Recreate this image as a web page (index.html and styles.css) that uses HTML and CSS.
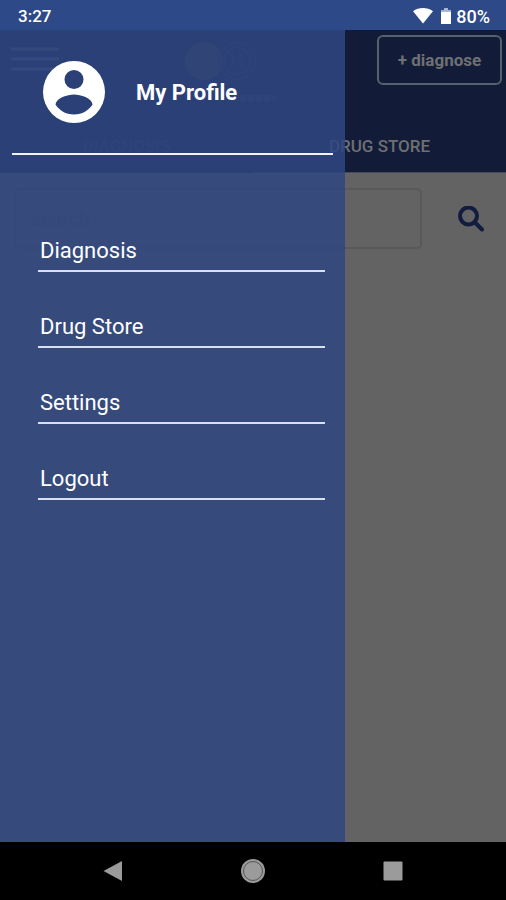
FILE: index.html
```html
<!DOCTYPE html>
<html lang="en">
<head>
<meta charset="utf-8">
<meta name="viewport" content="width=device-width, initial-scale=1">
<title>My Profile</title>
<link rel="stylesheet" href="styles.css">
</head>
<body>
<div class="status">
  <span class="clock">3:27</span>
  <span class="indicators">
    <svg class="wifi" viewBox="0 0 20 16" aria-hidden="true"><path d="M0 3.200C5.600-1 14.400-1 20 3.200L10 15.500Z"/></svg>
    <svg class="battery" viewBox="0 0 10 16" aria-hidden="true"><path class="battery-empty" d="M3 0h4v2h3v3H0V2h3Z"/><path d="M0 4h10v12H0Z"/></svg>
    <span>80%</span>
  </span>
</div>
<div class="screen">
  <header class="header">
    <div class="topbar">
      <button class="menu" type="button" aria-label="Menu">
        <svg viewBox="0 0 48 24" aria-hidden="true"><path d="M0 2h48M0 12h48M0 22h48"/></svg>
      </button>
      <svg class="logo" viewBox="0 0 94 64" aria-hidden="true">
        <circle class="logo-sun" cx="20" cy="21" r="19"/>
        <circle class="logo-ring" cx="53" cy="21" r="18"/>
        <circle class="logo-ring" cx="53" cy="21" r="13"/>
        <path class="logo-ring" d="M47 14l4 5-3 6M54 12l5 6-4 5 4 6"/>
        <path class="logo-base" d="M56 58h36"/>
      </svg>
      <button class="diagnose" type="button">+ diagnose</button>
    </div>
    <nav class="tabs">
      <a class="tab" href="#diagnosis">DIAGNOSIS</a>
      <a class="tab active" href="#store">DRUG STORE</a>
    </nav>
  </header>
  <form class="search">
    <input class="field" type="text" placeholder="search" aria-label="Search">
    <button class="go" type="button" aria-label="Search">
      <svg viewBox="0 0 26 26" aria-hidden="true"><circle cx="10.500" cy="10" r="8.500"/><path d="M17 16.500l7 7"/></svg>
    </button>
  </form>
  <aside class="drawer">
    <a class="profile" href="#profile">
      <svg class="avatar" viewBox="0 0 64 64" aria-hidden="true"><path fill-rule="evenodd" d="M32 1a31 31 0 1 0 0 62a31 31 0 1 0 0-62ZM32 10a9.500 9.500 0 1 1 0 19a9.500 9.500 0 1 1 0-19ZM32 54.500C23.500 54.500 17.500 50.500 13.500 44.500C14 38 25.500 34.500 32 34.500S50 38 50.500 44.500C46.500 50.500 40.500 54.500 32 54.500Z"/></svg>
      <span>My Profile</span>
    </a>
    <nav class="links">
      <a class="link" href="#diagnosis">Diagnosis</a>
      <a class="link" href="#store">Drug Store</a>
      <a class="link" href="#settings">Settings</a>
      <a class="link" href="#logout">Logout</a>
    </nav>
  </aside>
</div>
<div class="system">
  <button type="button" aria-label="Back"><svg viewBox="0 0 24 24" aria-hidden="true"><path d="M2.500 12L21 2v20Z"/></svg></button>
  <button type="button" aria-label="Home"><svg viewBox="0 0 24 24" aria-hidden="true"><circle cx="12" cy="12" r="12"/><circle class="home-ring" cx="12" cy="12" r="9.500"/></svg></button>
  <button type="button" aria-label="Recent apps"><svg viewBox="0 0 24 24" aria-hidden="true"><rect x="2.500" y="2.500" width="19" height="19" rx="1"/></svg></button>
</div>
</body>
</html>
```

FILE: styles.css
```css
* { box-sizing: border-box; }
body {
  margin: 0;
  min-height: 100vh;
  display: flex;
  flex-direction: column;
  font-family: Roboto, "Liberation Sans", sans-serif;
  background: #636363;
}
a { color: inherit; text-decoration: none; }
button { padding: 0; border: 0; background: none; font: inherit; color: inherit; }
svg { display: block; }

.status {
  height: 30px;
  padding: 2px 16px 0 18px;
  display: flex;
  align-items: center;
  justify-content: space-between;
  background: #2e4987;
  color: #fff;
  font-size: 18px;
  font-weight: 500;
}
.clock { font-size: 17px; }
.indicators { display: flex; align-items: center; gap: 5px; }
.indicators svg { fill: #fff; }
.wifi { width: 20px; height: 16px; margin-right: 3px; }
.battery { width: 10px; height: 16px; }
.indicators .battery-empty { fill: #a9b5d3; }

.screen { position: relative; flex: 1; }
.header { background: #121c38; color: #6f7073; }
.topbar {
  height: 90px;
  padding: 5px 4px 0 11px;
  display: flex;
  align-items: flex-start;
}
.menu { width: 48px; padding-top: 12px; }
.menu svg { width: 48px; height: 24px; stroke: #555a66; stroke-width: 3; }
.logo { width: 94px; height: 64px; margin: 5px 0 0 125px; }
.logo-sun { fill: #443c38; }
.logo-ring { fill: none; stroke: #203050; stroke-width: 2; }
.logo-base { fill: none; stroke: #243352; stroke-width: 6; stroke-dasharray: 7 1; }
.diagnose {
  width: 125px;
  height: 50px;
  margin-left: auto;
  border: 2px solid #56606c;
  border-radius: 6px;
  font-size: 17px;
  font-weight: 700;
}
.tabs { display: grid; grid-template-columns: 1fr 1fr; }
.tab {
  height: 53px;
  line-height: 53px;
  text-align: center;
  font-size: 17px;
  font-weight: 500;
  color: #2e3547;
}
.tab.active { color: #6f7073; box-shadow: inset 0 -1px #45495a; }

.search { padding: 15px 22px 0 14px; display: flex; align-items: center; gap: 36px; }
.field {
  flex: 1;
  min-width: 0;
  height: 61px;
  padding: 0 14px;
  border: 2px solid #595959;
  border-radius: 5px;
  background: transparent;
  font: inherit;
  font-size: 20px;
}
.field::placeholder { color: #565656; opacity: 1; }
.go svg { width: 26px; height: 26px; fill: none; stroke: #121c40; stroke-width: 4; }
.go path { stroke-linecap: round; }

.drawer {
  position: absolute;
  inset: 0 auto 0 0;
  width: 68.2%;
  padding: 0 12px;
  background: rgba(47, 70, 128, 0.86);
  color: #fff;
}
.profile {
  height: 125px;
  padding: 0 0 0 30px;
  display: flex;
  align-items: center;
  gap: 30px;
  border-bottom: 2px solid #f0f3fa;
  font-size: 22px;
  line-height: 28px;
  font-weight: 700;
}
.profile span { padding-top: 2px; }
.avatar { width: 64px; height: 64px; fill: #fff; }
.links { padding: 41px 8px 0 26px; }
.link {
  display: block;
  height: 76px;
  padding: 35px 2px 0;
  border-bottom: 2px solid #d9e0ef;
  font-size: 22px;
  line-height: 40px;
}

.system {
  height: 58px;
  padding: 0 43px;
  display: grid;
  grid-template-columns: repeat(3, 1fr);
  justify-items: center;
  align-items: center;
  background: #000;
}
.system svg { width: 24px; height: 24px; fill: #9b9b9b; }
.system .home-ring { fill: none; stroke: #555; stroke-width: 1; }
```
